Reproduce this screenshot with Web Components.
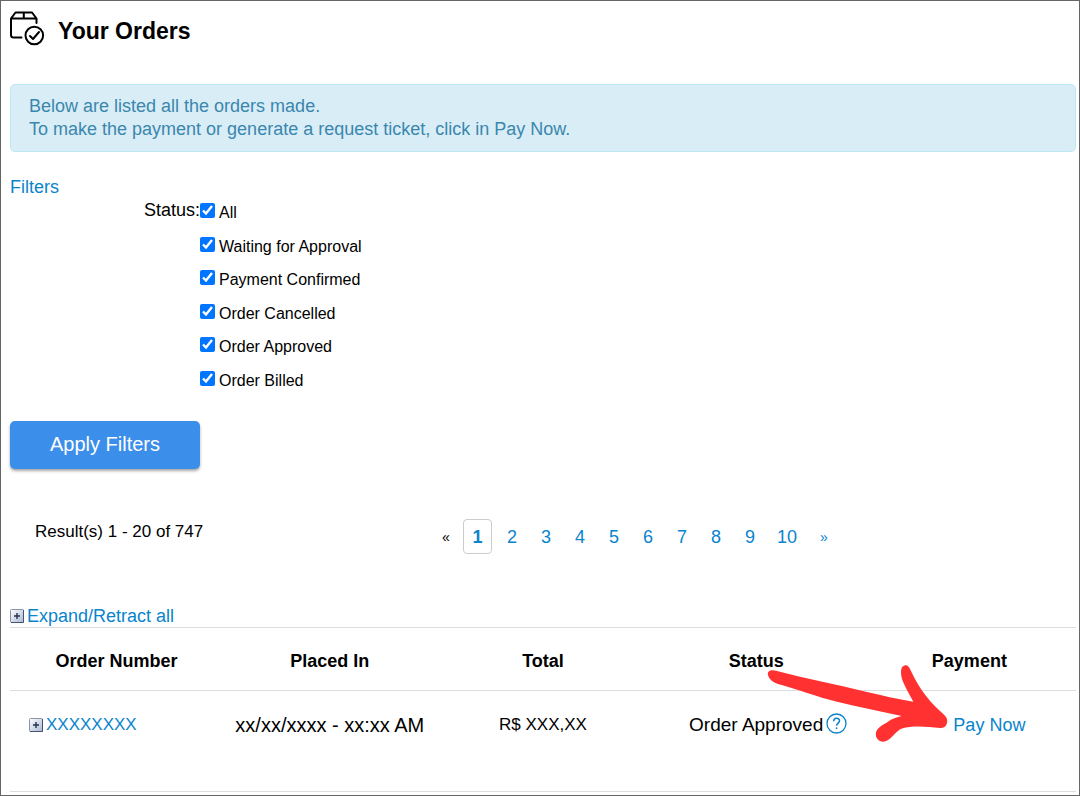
<!DOCTYPE html>
<html lang="en">
<head>
<meta charset="utf-8">
<meta name="viewport" content="width=device-width, initial-scale=1">
<title>Your Orders</title>
<style>
  html { --link: #0a84cc; --rule: #dddddd; }
  body { margin: 0; background: #fff; color: #000; font: 18px/24px "Liberation Sans", Arial, sans-serif; }
</style>
</head>
<body>
<orders-page></orders-page>

<template id="orders-page">
  <style>
    :host { display: block; box-sizing: border-box; min-height: 100vh; border: 1px solid #666; padding: 8px 3px 3px 9px; }
    order-notice { margin-top: 36px; }
    order-filters { margin-top: 23px; }
    order-results { margin-top: 50px; }
    order-table { margin-top: 51px; }
  </style>
  <page-heading>Your Orders</page-heading>
  <order-notice>Below are listed all the orders made.<br>To make the payment or generate a request ticket, click in Pay Now.</order-notice>
  <order-filters></order-filters>
  <order-results>Result(s) 1 - 20 of 747</order-results>
  <order-table></order-table>
</template>

<template id="page-heading">
  <style>
    :host { display: flex; gap: 12px; height: 39px; }
    svg { width: 36px; height: 37px; flex: none; }
    h1 { margin: 8px 0 0; font-size: 23px; line-height: 28px; }
  </style>
  <svg viewBox="0 0 36 37" fill="none" stroke="#000" stroke-width="2" stroke-linecap="round" stroke-linejoin="round" aria-hidden="true">
    <path d="M11.5 28.5H3.5Q1 28.5 1 26V9.500L5.500 3.500H22L26.500 9.500V14M1 9.500H26.500M13.800 3.500V9.500"/>
    <circle cx="24.300" cy="26.500" r="8.800"/>
    <path d="M20 27L23 30L29 23"/>
  </svg>
  <h1><slot></slot></h1>
</template>

<template id="order-notice">
  <style>
    :host { display: block; padding: 10px 18px; border: 1px solid #bce8f1; border-radius: 5px; background: #d9edf7; color: #3a87ad; line-height: 23px; }
  </style>
  <slot></slot>
</template>

<template id="order-filters">
  <style>
    :host { display: block; }
    a { color: var(--link); text-decoration: none; }
    fieldset { display: grid; grid-template-columns: 190px auto; margin: 0; padding: 0; border: 0; min-width: 0; }
    #status { text-align: right; line-height: 22px; }
    .options { display: grid; grid-template-rows: repeat(6, 1fr); height: 201px; }
    button { display: block; width: 190px; height: 48px; margin-top: 21px; padding: 0 0 2px; border: 0; border-radius: 5px; background: #3b8eea; color: #fff; font: 20px "Liberation Sans", Arial, sans-serif; box-shadow: 0 2px 3px rgba(0,0,0,.35); }
  </style>
  <a href="#filters">Filters</a>
  <fieldset aria-labelledby="status">
    <span id="status">Status:</span>
    <div class="options">
      <filter-option label="All"></filter-option>
      <filter-option label="Waiting for Approval"></filter-option>
      <filter-option label="Payment Confirmed"></filter-option>
      <filter-option label="Order Cancelled"></filter-option>
      <filter-option label="Order Approved"></filter-option>
      <filter-option label="Order Billed"></filter-option>
    </div>
  </fieldset>
  <button type="button">Apply Filters</button>
</template>

<template id="filter-option">
  <style>
    :host { display: block; font-size: 16px; line-height: 28px; }
    label { display: flex; gap: 4px; }
    input { width: 15px; height: 15px; margin: 4px 0 0; accent-color: #0075ff; }
  </style>
  <label><input type="checkbox" checked><span></span></label>
</template>

<template id="order-results">
  <style>
    :host { display: flex; align-items: flex-start; padding-left: 25px; }
    .count { flex: 0 0 404px; margin-top: 1px; font-size: 17px; }
    nav { display: flex; align-items: center; }
    a, .edge { box-sizing: border-box; min-width: 34px; padding-top: 2px; line-height: 33px; text-align: center; text-decoration: none; color: var(--link); }
    .edge { min-width: 24px; padding-right: 10px; font-size: 14px; color: #000; }
    a[aria-current] { min-width: 29px; margin-right: 3px; border: 1px solid #ccc; border-radius: 4px; line-height: 31px; font-weight: bold; }
    .ten { min-width: 40px; }
    .next { font-size: 14px; }
  </style>
  <span class="count"><slot></slot></span>
  <nav aria-label="Pages">
    <span class="edge">«</span>
    <a href="#1" aria-current="page">1</a><a href="#2">2</a><a href="#3">3</a><a href="#4">4</a><a href="#5">5</a><a href="#6">6</a><a href="#7">7</a><a href="#8">8</a><a href="#9">9</a><a class="ten" href="#10">10</a><a class="next" href="#next" aria-label="Next page">»</a>
  </nav>
</template>

<template id="expand-icon">
  <style>
    :host { display: inline-block; width: 14px; height: 14px; }
    svg { display: block; }
  </style>
  <svg width="14" height="14" viewBox="0 0 14 14" aria-hidden="true">
    <defs><linearGradient id="g" x1="0" y1="0" x2="1" y2="1"><stop offset="0" stop-color="#fff"/><stop offset="1" stop-color="#a9b8d4"/></linearGradient></defs>
    <rect x=".5" y=".5" width="13" height="13" rx="1" fill="url(#g)" stroke="#8994a8"/>
    <path d="M13.500 1V13.500H1" fill="none" stroke="#46536e"/>
    <path d="M4 7H10M7 4V10" stroke="#25324f" stroke-width="1.400"/>
  </svg>
</template>

<template id="order-table">
  <style>
    :host { display: block; }
    a { color: var(--link); text-decoration: none; }
    .expand { display: flex; align-items: center; gap: 3px; line-height: 22px; }
    table { width: 100%; table-layout: fixed; border-collapse: collapse; border-top: 1px solid var(--rule); }
    tr { border-bottom: 1px solid var(--rule); }
    th { height: 63px; padding: 4px 0 0; box-sizing: border-box; font-size: 18px; }
    td { height: 101px; box-sizing: border-box; padding: 22px 0 0; text-align: center; vertical-align: top; }
    .number { padding-left: 19px; text-align: left; font-size: 17px; }
    .number a { display: flex; align-items: center; gap: 3px; }
    .date { font-size: 20px; }
    .total { font-size: 17px; }
    .status { position: relative; font-size: 19px; }
    .help { position: absolute; margin-left: 3px; color: var(--link); }
    .help svg { display: block; }
    .pay { position: relative; padding-left: 40px; }
    .arrow { position: absolute; left: -103px; top: -31px; width: 200px; height: 90px; pointer-events: none; }
  </style>
  <a class="expand" href="#expand"><expand-icon></expand-icon>Expand/Retract all</a>
  <table>
    <thead><tr><th scope="col">Order Number</th><th scope="col">Placed In</th><th scope="col">Total</th><th scope="col">Status</th><th scope="col">Payment</th></tr></thead>
    <tbody><tr>
      <td class="number"><a href="#order"><expand-icon></expand-icon>XXXXXXXX</a></td>
      <td class="date">xx/xx/xxxx - xx:xx AM</td>
      <td class="total">R$ XXX,XX</td>
      <td class="status">Order Approved<a class="help" href="#help" aria-label="About this status"><svg width="21" height="21" viewBox="0 0 21 21" fill="none" stroke="currentColor" aria-hidden="true"><circle cx="10.500" cy="10.500" r="9.500" stroke-width="1.300"/><path d="M7.700 8.300C7.700 4.200 13.500 4.300 13.500 7.800C13.500 10 10.600 10.200 10.600 12.700" stroke-width="1.500"/><circle cx="10.600" cy="15.200" r=".9" fill="currentColor" stroke="none"/></svg></a></td>
      <td class="pay"><a href="#pay">Pay Now</a>
        <svg class="arrow" viewBox="760 660 200 90" aria-hidden="true"><path fill="#ff3131" d="M777 671C771 669 767 671 768 675C769 679 773 682.500 778 684C797 689 817 697 837 701.700C858 707 880 711 901.700 716C894 718 890 720 887 722.500C878 727 875 731 876 736C877 741 883 743.500 888 740C893 737 896 731 902 728.500C914 725 928 727 940 728C946 728.500 948 723 947 719C946 716 943 714 940 711C926 698 918 686 911 671C909 666 907 664.500 904.500 665.500C900 667 901 673 901.500 677C903 684 909 693 913.300 701.700C897 699 882 695.500 867 692C836 684 806 679 777 671Z"/></svg>
      </td>
    </tr></tbody>
  </table>
</template>

<script>
  class TemplateElement extends HTMLElement {
    constructor() {
      super();
      this.attachShadow({ mode: "open" });
    }
    connectedCallback() {
      if (this.shadowRoot.childNodes.length) return;
      this.shadowRoot.append(document.getElementById(this.localName).content.cloneNode(true));
      this.ready();
    }
    ready() {}
  }
  class FilterOption extends TemplateElement {
    ready() { this.shadowRoot.querySelector("span").textContent = this.getAttribute("label"); }
  }
  customElements.define("page-heading", class extends TemplateElement {});
  customElements.define("order-notice", class extends TemplateElement {});
  customElements.define("filter-option", FilterOption);
  customElements.define("order-filters", class extends TemplateElement {});
  customElements.define("order-results", class extends TemplateElement {});
  customElements.define("expand-icon", class extends TemplateElement {});
  customElements.define("order-table", class extends TemplateElement {});
  customElements.define("orders-page", class extends TemplateElement {});
</script>
</body>
</html>
